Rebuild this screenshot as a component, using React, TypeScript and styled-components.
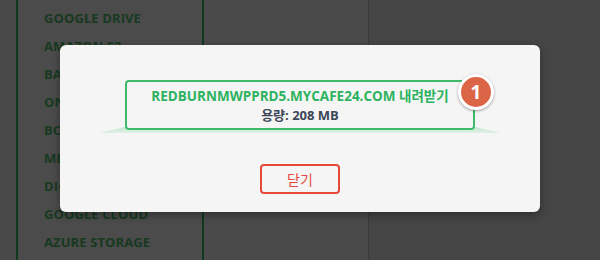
import React from "react";
import styled, { createGlobalStyle } from "styled-components";

const Global = createGlobalStyle`
  html, body { margin: 0; padding: 0; }
  body { width: 600px; height: 260px; overflow: hidden; background: #4a4a4a; font-family: "Open Sans", "Noto Sans CJK KR", sans-serif; }
`;

const Page = styled.div`
  position: relative;
  width: 600px;
  height: 260px;
  display: flex;
  background: #494949;
  overflow: hidden;
`;

const Sidebar = styled.ul`
  margin: 0 0 0 16px;
  padding: 4px 0 0 26px;
  width: 158px;
  list-style: none;
  border-left: 2px solid #0f3a1d;
  border-right: 2px solid #0f3a1d;
  background: #4b4b4b;
`;

const SideItem = styled.li`
  height: 28px;
  line-height: 28px;
  font-size: 13px;
  font-weight: 700;
  color: #17391f;
  letter-spacing: 0.1px;
  white-space: nowrap;
`;

const Middle = styled.div`
  width: 164px;
  border-right: 1px solid #3c3c3c;
  background: #4a4a4a;
`;

const Rest = styled.div`
  flex: 1;
  background: #454545;
`;

const Modal = styled.div`
  position: absolute;
  left: 60px;
  top: 45px;
  width: 480px;
  height: 167px;
  box-sizing: border-box;
  background: #f5f5f5;
  border-radius: 6px;
  box-shadow: 0 3px 8px rgba(0, 0, 0, 0.35);
  display: flex;
  flex-direction: column;
  align-items: center;
  padding-top: 35px;
`;

const BoxWrap = styled.div`
  position: relative;
  width: 350px;
  &::after {
    content: "";
    position: absolute;
    left: -26px;
    right: -26px;
    top: 47px;
    height: 6px;
    background: linear-gradient(#c6e6d2, #dff0e5);
    clip-path: polygon(0 100%, 26px 0, calc(100% - 26px) 0, 100% 100%);
  }
`;

const Box = styled.div`
  position: relative;
  z-index: 1;
  height: 50px;
  box-sizing: border-box;
  border: 2px solid #3dba6a;
  border-radius: 4px;
  background: #f5f5f5;
  display: flex;
  flex-direction: column;
  align-items: center;
  justify-content: center;
  gap: 1px;
`;

const Title = styled.div`
  font-size: 13.5px;
  font-weight: 700;
  color: #2db360;
  line-height: 18px;
  white-space: nowrap;
`;

const Size = styled.div`
  font-size: 13px;
  font-weight: 700;
  color: #3b4657;
  line-height: 18px;
`;

const Badge = styled.div`
  position: absolute;
  z-index: 2;
  right: -19px;
  top: -6px;
  width: 36px;
  height: 36px;
  box-sizing: border-box;
  border-radius: 50%;
  background: #dc6548;
  border: 3px solid #ffffff;
  box-shadow: 0 1px 3px rgba(0, 0, 0, 0.35);
  color: #fff;
  font-size: 19px;
  font-weight: 700;
  display: flex;
  align-items: center;
  justify-content: center;
  font-family: "Open Sans", sans-serif;
`;

const CloseButton = styled.button`
  margin-top: 34px;
  width: 80px;
  height: 30px;
  box-sizing: border-box;
  border: 2px solid #e6493b;
  border-radius: 4px;
  background: #f5f5f5;
  color: #e6493b;
  font-family: "Open Sans", "Noto Sans CJK KR", sans-serif;
  font-size: 14px;
  padding: 0;
`;

const items = [
  "GOOGLE DRIVE",
  "AMAZON S3",
  "BACKBLAZE B2",
  "ONEDRIVE",
  "BOX",
  "MEGA",
  "DIGITALOCEAN",
  "GOOGLE CLOUD",
  "AZURE STORAGE",
];

export default function App() {
  return (
    <>
      <Global />
      <Page>
        <Sidebar>
          {items.map((t) => (
            <SideItem key={t}>{t}</SideItem>
          ))}
        </Sidebar>
        <Middle />
        <Rest />
        <Modal>
          <BoxWrap>
            <Box>
              <Title>REDBURNMWPPRD5.MYCAFE24.COM 내려받기</Title>
              <Size>용량: 208 MB</Size>
            </Box>
            <Badge>1</Badge>
          </BoxWrap>
          <CloseButton>닫기</CloseButton>
        </Modal>
      </Page>
    </>
  );
}
